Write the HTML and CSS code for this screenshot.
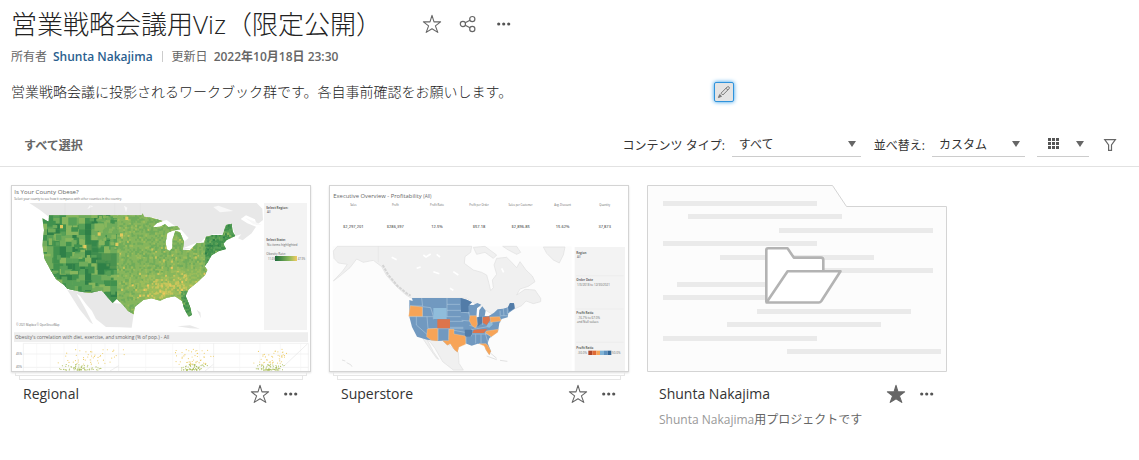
FILE: index.html
```html
<!DOCTYPE html>
<html lang="ja">
<head>
<meta charset="utf-8">
<title>営業戦略会議用Viz（限定公開）</title>
<link rel="stylesheet" href="styles.css">
</head>
<body>
<svg class="defs" aria-hidden="true">
  <symbol id="star" viewBox="0 0 20 20"><path d="M10 1.4 12 7.9 18.6 7.9 13.4 11.9 15.8 18.4 10 14.7 4.2 18.4 6.6 11.9 1.4 7.9 8 7.9Z" stroke="#666" stroke-width="1.1" stroke-linejoin="round"/></symbol>
  <symbol id="dots" viewBox="0 0 20 20"><g fill="#555"><circle cx="4.7" cy="10" r="1.6"/><circle cx="9.7" cy="10" r="1.6"/><circle cx="14.7" cy="10" r="1.6"/></g></symbol>
  <symbol id="caret" viewBox="0 0 8 6"><path d="M0 0H8L4 6Z" fill="#666"/></symbol>
</svg>

<header class="header">
  <div class="title-row">
    <h1 class="title">営業戦略会議用Viz（限定公開）</h1>
    <div class="title-actions">
      <button class="icon-btn" aria-label="お気に入り"><svg class="icon" fill="none"><use href="#star"/></svg></button>
      <button class="icon-btn" aria-label="共有"><svg class="icon" viewBox="0 0 20 20" fill="none" stroke="#666" stroke-width="1.2"><circle cx="4.9" cy="10" r="2.6"/><circle cx="14.3" cy="5.1" r="2.6"/><circle cx="14.3" cy="15" r="2.6"/><path d="M7.2 8.8 12 6.3M7.2 11.2 12 13.8"/></svg></button>
      <button class="icon-btn" aria-label="その他"><svg class="icon"><use href="#dots"/></svg></button>
    </div>
  </div>
  <div class="meta">
    <span>所有者</span><a class="owner" href="#">Shunta Nakajima</a><span class="bar"></span><span>更新日</span><b class="date">2022年10月18日 23:30</b>
  </div>
  <div class="desc-row">
    <p class="desc">営業戦略会議に投影されるワークブック群です。各自事前確認をお願いします。</p>
    <button class="edit" aria-label="編集"><svg class="edit-icon" viewBox="0 0 14 14" fill="none" stroke="#777" stroke-width="1"><path d="M4 8.2 10.2 2Q11.2 1.2 12 2T12 3.8L5.8 10ZM9 3.2 10.8 5"/><path d="M2.7 9.5 4.5 11.3 1.4 12.6Z" fill="#777"/></svg></button>
  </div>
</header>

<div class="toolbar">
  <button class="select-all">すべて選択</button>
  <div class="filters">
    <label class="filter-label" for="type">コンテンツ タイプ:</label>
    <div class="select type-select"><select id="type"><option>すべて</option></select><svg class="caret"><use href="#caret"/></svg></div>
    <label class="filter-label sort-label" for="sort">並べ替え:</label>
    <div class="select sort-select"><select id="sort"><option>カスタム</option></select><svg class="caret"><use href="#caret"/></svg></div>
    <button class="view-btn" aria-label="グリッド表示"><svg class="grid-icon" viewBox="0 0 12 12"><path d="M0 0h3v3H0zM4 0h3v3H4zM8 0h3v3H8zM0 4h3v3H0zM4 4h3v3H4zM8 4h3v3H8zM0 8h3v3H0zM4 8h3v3H4zM8 8h3v3H8z" fill="#555"/></svg><svg class="caret"><use href="#caret"/></svg></button>
    <button class="icon-btn" aria-label="フィルター"><svg class="icon" viewBox="0 0 20 20" fill="none" stroke="#666" stroke-width="1.2"><path d="M4.7 4.6H15.4L11.5 10V15.3H8.6V10Z"/></svg></button>
  </div>
</div>

<main class="cards">
  <article class="card">
    <div class="thumb">
      <svg class="viz" viewBox="36 33 894 555" role="img" aria-label="Regional">
        <defs>
          <clipPath id="us"><path id="usPath" d="M127 130 146 140 147 121H425L428 115 432 125 455 128 488 138 470 145 458 157 480 155 495 148 505 156 532 154 540 163 517 167 502 174 497 202 500 222 508 228 517 220 518 192 526 168 540 172 552 200 548 226 570 226 590 205 612 203 618 185 640 180H668L678 150 695 146 698 170 706 183 680 195 670 206 678 222 655 229 635 241 623 262 614 274 622 285 615 300 592 322 566 343 557 362 572 400 575 420 566 425 553 402 546 378 525 364 500 368 480 377 455 370 430 375 404 396 401 418 384 408 366 386 350 372 338 384 325 370 305 346 270 354 242 350 202 341 192 330 168 312 150 282 134 252 127 210 132 165Z"/></clipPath>
          <linearGradient id="green"><stop stop-color="#1b6b3c"/><stop offset=".65" stop-color="#8cb95a"/><stop offset="1" stop-color="#f3cb62"/></linearGradient>
        </defs>
        <g fill="#e8e8e8">
          <path d="M88 84H770L787 101 789 135 770 150 765 133 738 121 722 132 742 145 768 155 755 175 728 196 714 190 724 178 706 183 695 146 678 150 668 178H640L618 185 590 215 548 226 542 190 526 160 495 140 455 126H147L120 105Z"/>
          <path d="M202 345 242 350 305 346 338 384 366 386 401 418 395 458 362 457 318 456 288 432 276 408 258 387 240 362 230 356 255 400 279 448 270 442 238 402Z"/>
          <path d="M532 454 570 451 600 461 570 460ZM590 404 601 412 603 430Z"/>
        </g>
        <path d="M270 90 262 102 280 94ZM372 92 382 98 378 112ZM640 96 655 92 700 108 660 112ZM735 128 760 138 785 150 760 148Z" fill="#f8f8f8"/>
        <path d="M455 157 470 143 500 135 530 157 505 156 480 155ZM500 178 515 166 520 180 518 218 502 222ZM526 160 544 165 566 189 552 200 540 178ZM549 220 590 203 614 203 580 220Z" fill="#fff"/>
        <g stroke="#ddd" stroke-width="1"><path d="M195 84V121M272 84V121M344 84V121M421 84V116"/></g>
        <g id="counties" clip-path="url(#us)"></g>
        <rect x="792" y="84" width="129" height="381" fill="#f3f3f3"/>
        <rect x="825" y="243" width="66" height="15" fill="url(#green)"/>
        <g class="viz-text">
          <text x="43" y="58" font-size="18.5">Is Your County Obese?</text>
          <text x="43" y="74" font-size="9">Select your county to see how it compares with other counties in the country.</text>
          <g font-size="9.5"><text x="799" y="101" font-weight="700">Select Region:</text><text x="801" y="114">All</text><text x="799" y="199" font-weight="700">Select State:</text><text x="801" y="213">No items highlighted</text><text x="799" y="240">Obesity Rate:</text></g>
          <g font-size="8"><text x="804" y="254">11.6%</text><text x="893" y="254">47.9%</text><text x="49" y="453">© 2021 Mapbox © OpenStreetMap</text></g>
        </g>
        <path d="M42 472H924V501H42Z" fill="#eee"/>
        <text class="viz-text" x="45" y="492" font-size="14.5">Obesity's correlation with diet, exercise, and smoking (% of pop.) - All</text>
        <g fill="none" stroke="#e5e5e5" stroke-width="1.5"><path d="M70 588V505H925V588M356 505V588M641 505V588M70 537H925M70 577H925" /><path d="M110 505V588M151 505V588M192 505V588M233 505V588M274 505V588M315 505V588M437 505V588M518 505V588M599 505V588M719 505V588M780 505V588M841 505V588M902 505V588" stroke="#f2f2f2"/><path d="M330 588 356 572M615 588 640 568M850 575 922 507" stroke="#ddd"/></g>
        <g class="viz-text" font-size="9"><text x="48" y="540">45%</text><text x="48" y="579">40%</text></g>
        <g id="scatter"></g>
      </svg>
    </div>
    <div class="sheet"></div><div class="sheet sheet-back"></div>
    <div class="card-row">
      <h2 class="card-name">Regional</h2>
      <button class="icon-btn" aria-label="お気に入り"><svg class="icon" fill="none"><use href="#star"/></svg></button>
      <button class="icon-btn" aria-label="その他"><svg class="icon"><use href="#dots"/></svg></button>
    </div>
  </article>

  <article class="card">
    <div class="thumb">
      <svg class="viz" viewBox="30 33 894 555" role="img" aria-label="Superstore">
        <g class="viz-text">
          <text x="40" y="68" font-size="17.5">Executive Overview - Profitability <tspan font-size="14">(All)</tspan></text>
          <g font-size="8" text-anchor="middle"><text x="100" y="93">Sales</text><text x="226" y="93">Profit</text><text x="351" y="93">Profit Ratio</text><text x="477" y="93">Profit per Order</text><text x="602" y="93">Sales per Customer</text><text x="728" y="93">Avg. Discount</text><text x="854" y="93">Quantity</text></g>
          <g font-size="12" font-weight="600" text-anchor="middle"><text x="100" y="159">$2,297,201</text><text x="226" y="159">$286,397</text><text x="351" y="159">12.5%</text><text x="477" y="159">$57.18</text><text x="602" y="159">$2,896.85</text><text x="728" y="159">15.62%</text><text x="854" y="159">37,873</text></g>
        </g>
        <path d="M38 214H755V588H38Z" fill="#fcfcfc"/>
        <g fill="#f0f0f0" stroke="#e0e0e0" stroke-width="2" stroke-linejoin="round">
          <path d="M40 228 52 214H455L452 232 435 245 433 265 460 285 485 292 500 300 505 318 512 347 520 338 517 315 530 298 522 270 530 250 560 247 575 262 590 278 600 260 618 285 637 303 645 320 625 334 600 342 590 360 615 343 645 345 662 370 662 380 640 386 618 378 605 392 583 402 560 410 520 420 488 400 440 370H275L258 360 230 335 200 302 185 275 160 256 130 262 110 252 90 278 60 303 40 318 68 288 82 268 55 264 42 250Z"/>
          <path d="M460 217 495 214 530 240 520 250 495 232 470 238ZM548 214H590L602 232 590 238 565 225ZM670 216H735L730 240 718 264 700 255 680 235Z"/>
          <path d="M308 490 367 495 415 532 417 565 430 585H400L368 560 345 520 330 500 322 495 340 530 356 553 350 550 325 515Z"/>
        </g>
        <path d="M310 240 318 246 332 237M215 247 230 254M340 290 358 296M400 290 415 300M545 280 551 292M390 340 400 346M290 280 302 276M350 238 360 246" fill="none" stroke="#fff" stroke-width="5"/>
        <path d="M188 270 205 300 232 332 260 355 272 362" fill="none" stroke="#d4d4d4" stroke-width="6" stroke-dasharray="9 3"/>
        <path d="M175 214V262" stroke="#d8d8d8"/>
        <g transform="translate(0 345)">
          <path d="M268 30 278 33 276 24H422L440 29 456 37 443 44 460 45 472 39 484 44 471 55 469 82 476 82 478 60 487 49 497 62 494 78 505 79 522 68 533 58 549 56 564 52 570 39 582 40 584 56 565 70 563 82 545 87 538 100 534 125 508 145 503 159 513 184 508 195 498 180 491 163 473 161 455 167 436 160 416 172 413 187 403 179 391 161 382 166 368 152 352 153 321 149 291 140 276 111 268 80Z" fill="#7199c0"/>
          <g stroke="#b9d0e3" stroke-width="1.5" fill="none"><path d="M305 24 308 50 332 53 340 79H381M270 48H307M307 52V80M267 80H340M289 80V105L322 134M321 80 324 116H430M381 24V80H422M340 80V88M381 43H420M381 61H423M389 94H430M390 112H430M354 115V151M387 118V148M386 118 435 127M422 66 449 69M425 91 450 93M445 63 449 80M455 116 454 139M438 160V138H452M467 133V160M483 133V160M496 130 503 155M452 132H503M472 82V109M488 80V105M448 106 472 112M455 119 508 109M507 80V98M540 62 541 80M550 57 552 77M562 54V73M543 77H563M540 84 542 97M495 128 515 141"/></g>
          <g fill="#527ca8"><path d="M422 24 440 29 456 37 445 48 446 66H423ZM434 119H456V133L451 140H435ZM472 82 486 80 486 100 472 110ZM564 52 570 39 582 40 584 55 568 64Z"/></g>
          <path d="M340 54H380V87H340ZM504 100 517 94 518 104 508 113 499 110Z" fill="#90bddb"/>
          <g fill="#f7a457" stroke="#ffd3a6" stroke-width="1"><path d="M271 47 307 51V79H266ZM322 117 353 115V153L334 151 320 140ZM387 118H402V132L436 138 437 163 416 172 413 187 403 179 391 161 382 166 368 152H386ZM450 77H469L472 103 466 114 455 106 448 92ZM510 81 539 80 543 93 512 97ZM499 123 535 118 533 127 514 140 496 128ZM477 161 498 161 503 166 513 184 508 195 498 180 493 168Z"/></g>
          <g fill="#dc744b"><path d="M352 88H390V115H352ZM488 82 508 79 510 91 500 105 488 98ZM462 119 502 117 491 129H457Z"/></g>
          <path d="M66 210 76 213M80 218 92 224 96 230M500 198 530 209M540 211 562 214M510 188 530 205" stroke="#e2e2e2" stroke-width="3" fill="none"/>
        </g>
        <path d="M764 216H915V588H764Z" fill="#f3f3f3"/><path d="M768 302H911M768 402H911M768 502H911" stroke="#e2e2e2"/>
        <g class="viz-text" font-size="9"><g font-weight="700"><text x="769" y="237">Region</text><text x="769" y="317">Order Date</text><text x="769" y="418">Profit Ratio</text><text x="769" y="522">Profit Ratio</text></g><text x="771" y="250">All</text><text x="771" y="332">1/3/2018 to 12/30/2021</text><text x="773" y="431">-16.7% to 67.0%</text><text x="771" y="445">and Null values</text><text x="773" y="537">-50.0%</text><text x="876" y="537">50.0%</text></g>
        <path d="M805 527h12v13h-12z" fill="#ae4627"/><path d="M817 527h12v13h-12z" fill="#df6934"/><path d="M829 527h11v13h-11z" fill="#f7a457"/><path d="M840 527h12v13h-12z" fill="#80b3d6"/><path d="M852 527h11v13h-11z" fill="#5d91bf"/><path d="M863 527h11v13h-11z" fill="#326595"/>
      </svg>
    </div>
    <div class="sheet"></div><div class="sheet sheet-back"></div>
    <div class="card-row">
      <h2 class="card-name">Superstore</h2>
      <button class="icon-btn" aria-label="お気に入り"><svg class="icon" fill="none"><use href="#star"/></svg></button>
      <button class="icon-btn" aria-label="その他"><svg class="icon"><use href="#dots"/></svg></button>
    </div>
  </article>

  <article class="card folder-card">
    <svg class="folder" viewBox="0 0 300 187" role="img" aria-label="プロジェクト">
      <path d="M.5.5H185.5L199.5 21.5H299.5V186.5H.5Z" fill="#fcfcfc" stroke="#d4d4d4"/>
      <path d="M16 16h154v5H16zM41 29h154v5H41zM132 43h154v5H132zM16 56h154v5H16zM73 70h154v5H73zM132 83h154v5H132zM30 97h154v5H30zM16 110h154v5H16zM110 124h154v5H110zM80 137h154v5H80zM16 151h154v5H16zM140 164h154v5H140z" fill="#eaeaea"/>
      <g fill="#fff" stroke="#b3b3b3" stroke-width="2.6" stroke-linejoin="round"><path d="M119.3 117V65Q119.3 63.3 121 63.3H140.5L146.8 72.6H174Q176.3 72.6 176.3 75V86.3"/><path d="M119.5 117.5 140.6 86.3H193.5L174.2 116.2Q173.2 117.5 172 117.5Z"/></g>
    </svg>
    <div class="card-row">
      <h2 class="card-name">Shunta Nakajima</h2>
      <button class="icon-btn" aria-label="お気に入り解除"><svg class="icon" fill="#666"><use href="#star"/></svg></button>
      <button class="icon-btn" aria-label="その他"><svg class="icon"><use href="#dots"/></svg></button>
    </div>
    <p class="card-desc"><span class="card-desc-name">Shunta Nakajima</span>用プロジェクトです</p>
  </article>
</main>
<script src="charts.js"></script>
</body>
</html>
```

FILE: styles.css
```css
* { box-sizing: border-box; }
body {
  margin: 0;
  background: #fff;
  color: #333;
  font-family: "Open Sans", "Noto Sans CJK JP", sans-serif;
  font-size: 14px;
}
h1, h2, p { margin: 0; font-weight: 400; }
button, select { font: inherit; color: inherit; border: 0; background: none; padding: 0; }
svg { display: block; }
.defs { display: none; }
.icon { width: 20px; height: 20px; }
.icon-btn { width: 20px; height: 20px; flex: none; }

.header { padding: 4px 11px 0; }
.title-row { display: flex; align-items: center; gap: 40px; height: 40px; }
.title { font-size: 26px; font-weight: 300; line-height: 40px; color: #222; white-space: nowrap; }
.title-actions { display: flex; gap: 16px; }
.meta { display: flex; align-items: center; height: 24px; font-size: 12px; color: #666; }
.owner { margin-left: 6px; color: #2b5f8f; font-weight: 600; text-decoration: none; }
.bar { width: 1px; height: 11px; margin: 0 9px; background: #ccc; }
.date { margin-left: 6px; font-weight: 600; }
.desc-row { display: flex; align-items: center; justify-content: space-between; max-width: 723px; height: 24px; margin-top: 12px; }
.desc { font-size: 14px; font-weight: 300; line-height: 24px; color: #222; }
.edit { display: grid; place-items: center; width: 20px; height: 20px; background: #e4e4e4; border: 1px solid #2f93dc; border-radius: 2px; box-shadow: 0 0 4px #2f9be8; }
.edit-icon { width: 14px; height: 14px; }

.toolbar { display: flex; align-items: center; justify-content: space-between; margin-top: 19px; height: 44px; padding: 0 19px 0 24px; border-bottom: 1px solid #e2e2e2; }
.select-all { font-size: 12px; font-weight: 600; color: #666; }
.filters { display: flex; align-items: center; font-size: 12px; }
.sort-label { margin-left: 13px; }
.select { display: grid; align-items: center; height: 24px; margin-left: 7px; border-bottom: 1px solid #ccc; }
.type-select { width: 129px; }
.sort-select { width: 93px; }
.select select { grid-area: 1 / 1; height: 23px; padding-left: 7px; appearance: none; font-size: 12px; }
.caret { width: 8px; height: 6px; }
.select .caret { grid-area: 1 / 1; justify-self: end; margin-right: 5px; pointer-events: none; }
.view-btn { display: flex; align-items: center; justify-content: space-between; width: 52px; height: 24px; margin: 0 11px 0 12px; padding: 0 5px 0 11px; border-bottom: 1px solid #ccc; }
.grid-icon { width: 12px; height: 12px; }

.cards { display: grid; grid-template-columns: repeat(auto-fill, 300px); gap: 18px; padding: 18px 11px 20px; }
.thumb { border: 1px solid #d4d4d4; box-shadow: 0 1px 2px #ddd; }
.viz { width: 100%; height: auto; }
.viz-text { fill: #666; font-family: "Open Sans", sans-serif; }
.sheet { height: 4px; margin: 0 4px; border: 1px solid #e6e6e6; border-top: 0; }
.sheet-back { margin: 0 8px; }
.card-row { display: flex; align-items: center; gap: 11px; padding: 0 10px 0 12px; height: 28px; }
.card-name { flex: 1; font-size: 14px; line-height: 20px; }
.folder { width: 100%; height: auto; }
.folder-card .card-row { margin-top: 8px; }
.card-desc { padding: 0 12px; font-size: 12px; line-height: 24px; color: #666; }
.card-desc-name { color: #999; }
```

FILE: charts.js
```js
const NS = "http://www.w3.org/2000/svg";
let seed = 7;
function rnd() {
  seed = (seed * 16807) % 2147483647;
  return seed / 2147483647;
}
function add(parent, name, attrs) {
  const el = document.createElementNS(NS, name);
  for (const k in attrs) el.setAttribute(k, attrs[k]);
  parent.appendChild(el);
}

// County tiles: large and dark in the west, small and mixed in the east.
const ramp = ["#2f8048", "#40914e", "#57a057", "#70ac5b", "#87b65d", "#9cbd5b", "#c8c65b", "#edc95d"];
const counties = document.getElementById("counties");
add(counties, "rect", { x: 120, y: 110, width: 600, height: 320, fill: "#83b45d" });
for (let y = 112; y < 430; y += 6) {
  for (let x = 350; x < 712; x += 6) {
    const south = Math.exp(-((x - 475) ** 2) / 4200 - ((y - 345) ** 2) / 2200);
    const mid = Math.exp(-((x - 565) ** 2) / 5000 - ((y - 315) ** 2) / 1800);
    const ne = x > 610 && y < 270 ? -2.4 : 0;
    const tip = x > 540 && y > 345 ? -2.5 : 0;
    let v = 3.7 + (rnd() - 0.5) * 1.9 + south * 1.9 + mid * 1.1 + ne + tip;
    if (rnd() > 0.95) v += 1.8;
    v = Math.max(0, Math.min(7, Math.round(v)));
    add(counties, "rect", { x: x + rnd() * 3, y: y + rnd() * 3, width: 7, height: 7, fill: ramp[v] });
  }
}
for (let y = 112; y < 375; y += 17) {
  for (let x = 122; x < 350; x += 19) {
    const v = Math.floor(rnd() * 4.6);
    add(counties, "rect", { x, y, width: 20, height: 18, fill: ramp[v] });
  }
}
for (let i = 0; i < 90; i++) {
  add(counties, "rect", { x: 125 + rnd() * 212, y: 118 + rnd() * 235, width: 8 + rnd() * 20, height: 6 + rnd() * 20, fill: ramp[1 + Math.floor(rnd() * 4)] });
}
for (let i = 0; i < 40; i++) {
  add(counties, "rect", { x: 285 + rnd() * 62, y: 118 + rnd() * 100, width: 6 + rnd() * 12, height: 5 + rnd() * 10, fill: ramp[3 + Math.floor(rnd() * 2)] });
}
add(counties, "path", { d: "M255 155H270V195H295V235H350V285H290V240H262Z", fill: "#2f8048", opacity: 0.6 });
[[180, 150], [250, 210], [293, 172], [346, 203], [360, 175], [376, 125]].forEach(([x, y]) =>
  add(counties, "rect", { x, y, width: 9, height: 10, fill: "#e1ca5d" }));

const scatter = document.getElementById("scatter");
[[235, 75, 1], [575, 42, 0.2], [805, 45, 0.4]].forEach(([cx, spread, lean]) => {
  for (let i = 0; i < 110; i++) {
    const h = Math.pow(rnd(), 2.3) * 62;
    const x = cx + (rnd() + rnd() - 1) * spread * (1 + h / 80) + h * lean;
    add(scatter, "circle", { cx: x, cy: 585 - h, r: 1.7, fill: h > 17 ? "#edcc67" : "#a8bc58" });
  }
});
```
